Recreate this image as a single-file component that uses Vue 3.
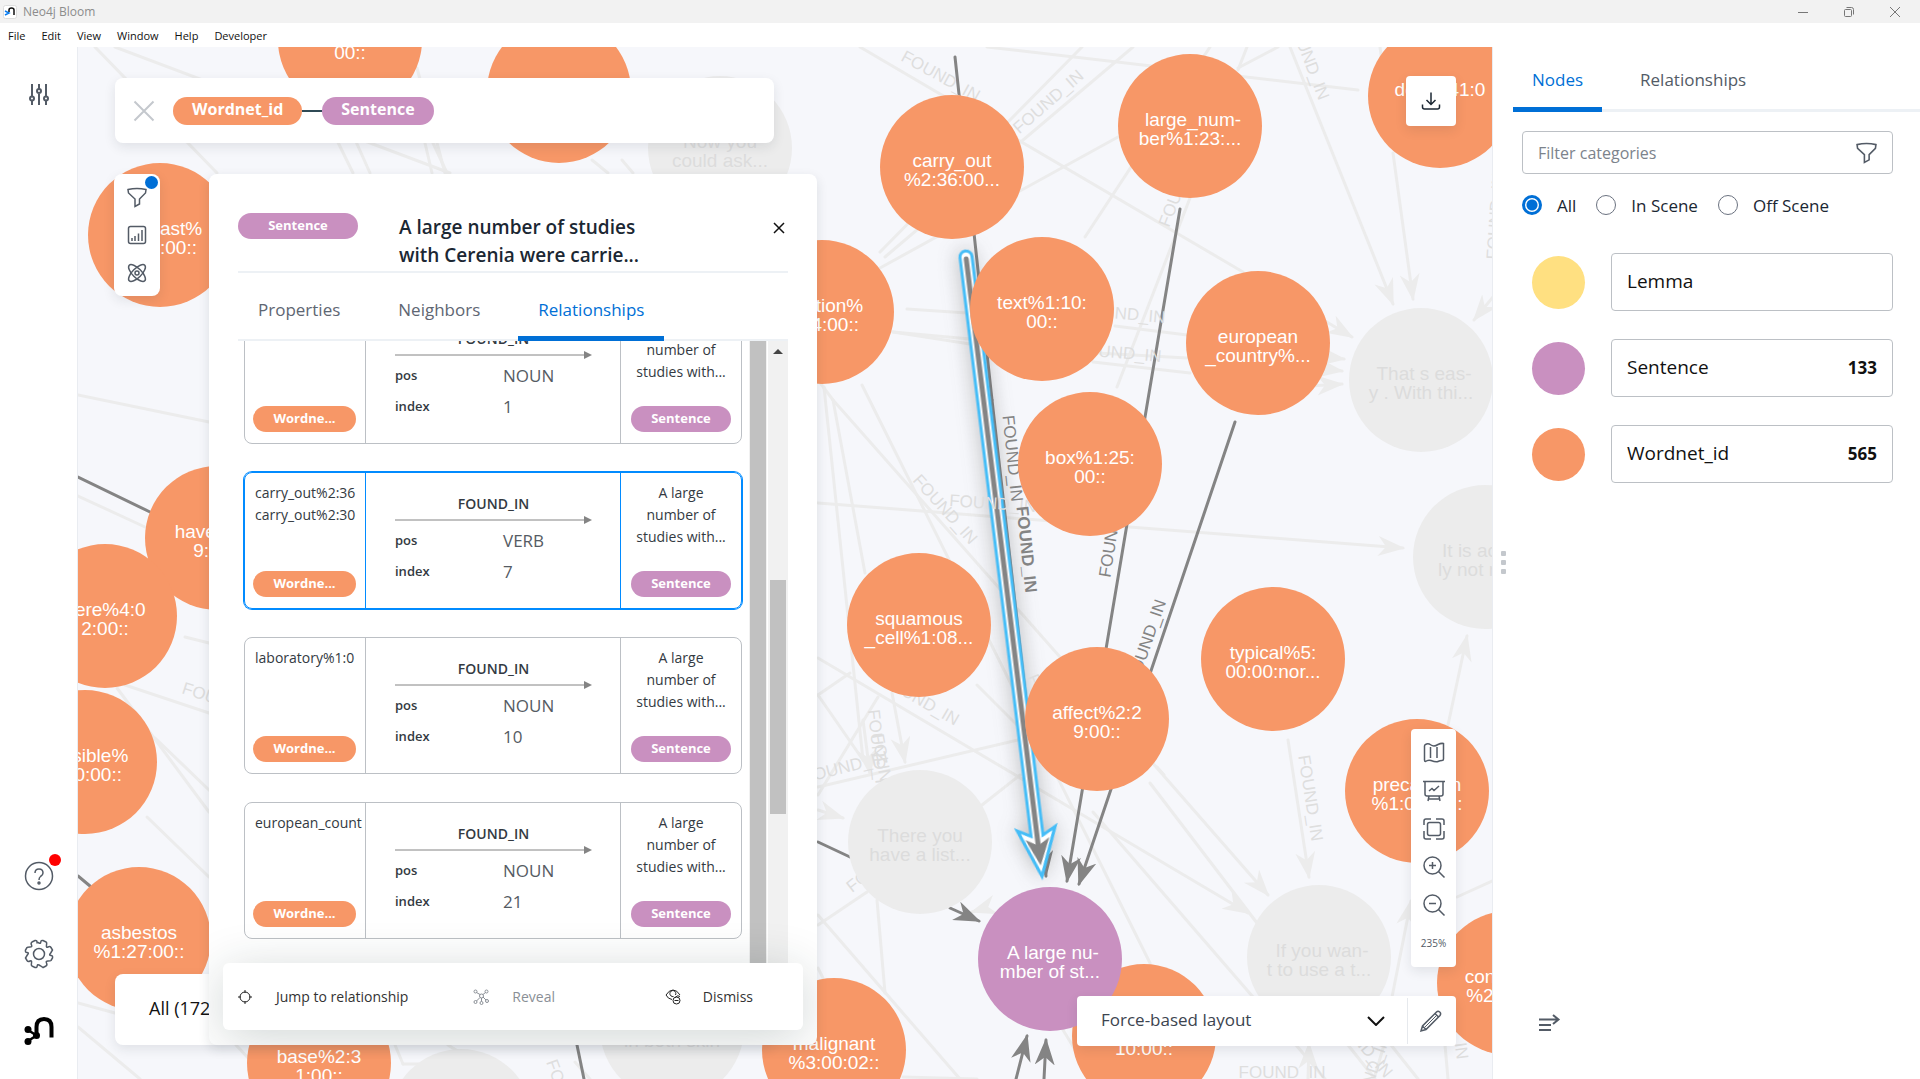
<script setup>
import { ref } from 'vue'

const R = 72

const nodes = [
  { x: 720, y: 148, kind: 'faded', lines: ['Now you', 'could ask...'] },
  { x: 1421, y: 380, kind: 'faded', lines: ['That s eas-', 'y . With thi...'] },
  { x: 1485, y: 557, kind: 'faded', lines: ['It is actual-', 'ly not rea...'] },
  { x: 920, y: 842, kind: 'faded', lines: ['There you', 'have a list...'] },
  { x: 1319, y: 957, kind: 'faded', lines: ['If you wan-', 't to use a t...'] },
  { x: 672, y: 1028, kind: 'faded', lines: ['', 'in both skin'] },
  { x: 461, y: 1121, kind: 'faded', lines: [] },
  { x: 350, y: 40, kind: 'word', lines: ['', '00::'] },
  { x: 559, y: 91, kind: 'word', lines: [] },
  { x: 160, y: 235, kind: 'word', lines: ['contrast%', '1:08:00::'] },
  { x: 217, y: 538, kind: 'word', lines: ['have%2:4', '9:00::'] },
  { x: 105, y: 616, kind: 'word', lines: ['here%4:0', '2:00::'] },
  { x: 85, y: 762, kind: 'word', lines: ['possible%', '3:00:00::'] },
  { x: 139, y: 939, kind: 'word', lines: ['asbestos', '%1:27:00::'] },
  { x: 319, y: 1063, kind: 'word', lines: ['base%2:3', '1:00::'] },
  { x: 834, y: 1050, kind: 'word', lines: ['malignant', '%3:00:02::'] },
  { x: 822, y: 312, kind: 'word', lines: ['solution%', '1:14:00::'] },
  { x: 952, y: 167, kind: 'word', lines: ['carry_out', '%2:36:00...'] },
  { x: 1190, y: 126, kind: 'word', lines: ['large_num-', 'ber%1:23:...'] },
  { x: 1440, y: 96, kind: 'word', lines: ['do%2:41:0', ''] },
  { x: 1042, y: 309, kind: 'word', lines: ['text%1:10:', '00::'] },
  { x: 1258, y: 343, kind: 'word', lines: ['european', '_country%...'] },
  { x: 1090, y: 464, kind: 'word', lines: ['box%1:25:', '00::'] },
  { x: 919, y: 625, kind: 'word', lines: ['squamous', '_cell%1:08...'] },
  { x: 1273, y: 659, kind: 'word', lines: ['typical%5:', '00:00:nor...'] },
  { x: 1097, y: 719, kind: 'word', lines: ['affect%2:2', '9:00::'] },
  { x: 1417, y: 791, kind: 'word', lines: ['precaution', '%1:04:00::'] },
  { x: 1509, y: 983, kind: 'word', lines: ['consider%', '%2:41:0...'] },
  { x: 1144, y: 1036, kind: 'word', lines: ['', '10:00::'] },
  { x: 1050, y: 959, kind: 'sentence', lines: ['A large nu-', 'mber of st...'] }
]

const fadedEdges = [
  [95, 47, 217, 173], [115, 47, 450, 173], [330, 126, 353, 173], [349, 126, 370, 173],
  [417, 68, 445, 173], [425, 143, 432, 173], [433, 143, 447, 173], [592, 160, 608, 173], [622, 160, 633, 173],
  [860, 47, 1243, 272], [987, 47, 1358, 90], [1082, 47, 880, 252], [1133, 47, 885, 257],
  [880, 268, 1118, 137], [1238, 68, 1278, 47], [1238, 70, 1247, 47], [1210, 47, 1085, 237],
  [1190, 198, 1117, 387], [907, 309, 967, 313], [1115, 326, 1187, 335], [893, 332, 970, 339],
  [893, 332, 970, 344], [1097, 353, 1187, 358], [1093, 362, 1190, 373], [862, 385, 1150, 963],
  [818, 380, 833, 400], [824, 387, 863, 760], [833, 400, 1060, 657], [833, 400, 865, 573],
  [1157, 767, 1164, 775], [977, 685, 1020, 728], [818, 695, 850, 673], [818, 695, 863, 760],
  [878, 697, 818, 795], [818, 787, 1018, 740], [1020, 775, 982, 805], [867, 892, 818, 925],
  [818, 915, 960, 1079], [877, 900, 885, 993], [903, 1077, 977, 1079], [1093, 812, 1253, 997],
  [1060, 1025, 1074, 1048], [1380, 47, 1382, 62], [1457, 897, 1492, 881], [1445, 1045, 1448, 1079],
  [1348, 1045, 1375, 1079], [1391, 1045, 1418, 1079], [1296, 1045, 1325, 1079], [1384, 1045, 1374, 1079],
  [78, 395, 209, 422], [78, 496, 145, 527], [185, 637, 209, 643], [125, 685, 209, 713],
  [117, 688, 209, 812], [155, 738, 209, 790], [147, 817, 209, 877], [78, 1003, 115, 1013],
  [78, 1027, 140, 1079], [236, 1045, 250, 1060], [395, 1045, 403, 1064], [403, 1064, 420, 1064],
  [448, 1045, 475, 1062], [575, 1062, 590, 1079], [1150, 783, 1257, 923], [818, 968, 823, 978]
]
const fadedArrows = [
  [1290, 47, 1393, 304], [1393, 153, 1413, 299], [1493, 297, 1474, 320], [1320, 318, 1352, 337],
  [1310, 355, 1344, 359], [1310, 367, 1342, 371], [1310, 386, 1342, 384], [818, 503, 1403, 548],
  [892, 693, 905, 762], [863, 720, 870, 774], [1150, 760, 1268, 895], [818, 658, 1248, 913],
  [818, 810, 843, 818], [1288, 740, 1309, 877], [1448, 725, 1467, 636], [1392, 997, 1411, 901],
  [1308, 1079, 1309, 1044], [985, 908, 972, 912]
]
const darkEdges = [
  [955, 57, 992, 400], [78, 477, 150, 512], [78, 876, 90, 886], [818, 842, 850, 857], [577, 1045, 584, 1079]
]
const darkArrows = [
  [992, 400, 1046, 876], [1180, 209, 1067, 881], [1235, 422, 1079, 884], [950, 908, 979, 921],
  [1016, 1079, 1027, 1036], [1044, 1079, 1046, 1040]
]

const label = (x, y, angle, anchor = 'middle', tone = 'faded') => ({ x, y, angle, anchor, tone })
const edgeLabels = [
  label(938, 81, 29), label(1052, 106, -41), label(1169, 228, -69, 'start'), label(1165, 323, 5, 'end'),
  label(1161, 362, 5, 'end'), label(1319, 101, 69, 'end'), label(941, 513, 48), label(949, 506, 4, 'start'),
  label(955, 726, 30, 'end'), label(868, 710, 84, 'start'), label(872, 735, 80, 'start'), label(889, 762, -14, 'end'), label(852, 893, -38, 'start'),
  label(1305, 799, 81), label(1282, 1078, 0), label(1385, 1079, 50, 'end'), label(1375, 1079, -70, 'middle'),
  label(1457, 1060, 82, 'end'), label(1498, 260, -86, 'start'), label(181, 693, 18, 'start'),
  label(546, 1062, 70, 'start'), label(1027, 677, 68, 'start'),
  label(1007, 459, 84, 'middle', 'dark'), label(1021, 550, 84, 'middle', 'dark strong'),
  label(1117, 535, -81, 'middle', 'dark'), label(1152, 643, -71, 'middle', 'dark')
]

const relations = [
  { from: ['typical%5:00'], pos: 'NOUN', index: 1 },
  { from: ['carry_out%2:36', 'carry_out%2:30'], pos: 'VERB', index: 7, selected: true },
  { from: ['laboratory%1:0'], pos: 'NOUN', index: 10 },
  { from: ['european_count'], pos: 'NOUN', index: 21 }
]

const categories = [
  { name: 'Lemma', count: '', tone: 'lemma' },
  { name: 'Sentence', count: '133', tone: 'sentence' },
  { name: 'Wordnet_id', count: '565', tone: 'word' }
]
const scopes = ['All', 'In Scene', 'Off Scene']
const scope = ref('All')
const filterText = ref('')
const menus = ['File', 'Edit', 'View', 'Window', 'Help', 'Developer']
</script>

<template>
  <div class="app">
    <header class="titlebar">
      <svg class="app-icon" viewBox="0 0 14 14" aria-hidden="true">
        <rect x="0.5" y="0.5" width="13" height="13" rx="2" fill="#fff" stroke="#ddd" />
        <path d="M6 7V5q0-2 2.500-2T11 5v5" fill="none" stroke="#111" stroke-width="1.500" />
        <path d="M2 6l4 2-4 2" fill="none" stroke="#0a7df0" stroke-width="1.500" />
      </svg>
      <span class="app-name">Neo4j Bloom</span>
      <div class="window-buttons">
        <button aria-label="Minimize"><svg width="12" height="12" viewBox="0 0 12 12"><path d="M1 6.500h10" /></svg></button>
        <button aria-label="Restore"><svg width="12" height="12" viewBox="0 0 12 12"><rect x="1.500" y="3.500" width="7" height="7" rx="1" /><path d="M3.500 1.500h5q2 0 2 2v5" /></svg></button>
        <button aria-label="Close window"><svg width="12" height="12" viewBox="0 0 12 12"><path d="M1 1l10 10M11 1L1 11" /></svg></button>
      </div>
    </header>
    <nav class="menubar">
      <button v-for="m in menus" :key="m">{{ m }}</button>
    </nav>

    <div class="workspace">
      <aside class="rail">
        <button aria-label="Perspectives">
          <svg width="22" height="24" viewBox="0 0 22 24" class="ico bold"><path d="M4 1v12M4 18v4M11 1v5M11 11v11M18 1v12M18 18v4" /><circle cx="4" cy="15.500" r="2" /><circle cx="11" cy="8" r="2" /><circle cx="18" cy="15.500" r="2" /></svg>
        </button>
        <div class="rail-bottom">
          <button aria-label="Help">
            <svg width="30" height="30" viewBox="0 0 30 30" class="ico"><circle cx="15" cy="15" r="13.500" /><path d="M11 12q0-4 4-4t4 4q0 2-2.500 3.500Q15 16.500 15 19" /><circle cx="15" cy="22" r="1" /></svg>
            <span class="alert-dot"></span>
          </button>
          <button aria-label="Settings">
            <svg width="30" height="30" viewBox="0 0 30 30" class="ico"><circle cx="15" cy="15" r="5.500" /><path d="M13 4.500Q13.500 1 11 1.500L8 3Q6.500 4 7.500 6t-1.500 2T3 8.500L1.500 11Q1 13.500 3 13.500T4 15t-1 1.500T1.500 19L3 21.500Q4 23 6 22t1.500 2T8 27l3 1.500Q13 29 13.200 27T15 26t1.800 1T19 28.500l3-1.500Q23.500 26 22.500 24T24 22t3-.5L28.500 19Q29 16.500 27 16.500T26 15t1-1.500T28.500 11L27 8.500Q26 7 24 8t-1.500-2T22 3l-3-1.500Q17 1 16.800 3T15 4t-2-.5" /></svg>
          </button>
          <svg width="30" height="28" viewBox="0 0 30 28" role="img" aria-label="Neo4j">
            <path d="M12.500 17V10q0-8 7.500-8t7.500 8v10.500" fill="none" stroke="#000" stroke-width="4" />
            <path d="M4 13l8.500 5.500L4 24" fill="none" stroke="#000" stroke-width="2.500" />
            <circle cx="4" cy="12.500" r="3.500" /><circle cx="12.500" cy="18.500" r="3.500" /><circle cx="4" cy="24.500" r="3.500" />
          </svg>
        </div>
      </aside>

      <main class="scene">
        <svg class="graph" aria-label="Graph scene">
          <defs>
            <marker id="tip-faded" markerUnits="userSpaceOnUse" markerWidth="28" markerHeight="22" refX="25" refY="10" orient="auto"><path d="M0 0L27 10L0 20L8 10Z" fill="#ececec" /></marker>
            <marker id="tip-dark" markerUnits="userSpaceOnUse" markerWidth="28" markerHeight="22" refX="25" refY="10" orient="auto"><path d="M0 0L27 10L0 20L8 10Z" fill="#848484" /></marker>
          </defs>
          <g transform="translate(-78 -47)">
            <g class="edge faded">
              <line v-for="(e, i) in fadedEdges" :key="i" :x1="e[0]" :y1="e[1]" :x2="e[2]" :y2="e[3]" />
              <line v-for="(e, i) in fadedArrows" :key="'a' + i" :x1="e[0]" :y1="e[1]" :x2="e[2]" :y2="e[3]" marker-end="url(#tip-faded)" />
            </g>
            <g class="edge dark">
              <line v-for="(e, i) in darkEdges" :key="i" :x1="e[0]" :y1="e[1]" :x2="e[2]" :y2="e[3]" />
              <line v-for="(e, i) in darkArrows" :key="'a' + i" :x1="e[0]" :y1="e[1]" :x2="e[2]" :y2="e[3]" marker-end="url(#tip-dark)" />
            </g>
            <g class="picked" transform="translate(966 257) rotate(83)">
              <path class="halo" d="M0 -6H583L576 -19L624 0L576 19L583 6H0A6 6 0 0 1 0 -6Z" />
              <line x1="2" y1="0" x2="598" y2="0" />
              <path class="head" d="M586 -12L613 0L586 12L593 0Z" />
            </g>
            <text v-for="(l, i) in edgeLabels" :key="'l' + i" :class="['edge-label', l.tone]" :text-anchor="l.anchor" :transform="`translate(${l.x} ${l.y}) rotate(${l.angle})`">FOUND_IN</text>
            <g v-for="(n, i) in nodes" :key="'n' + i" :class="['node', n.kind]">
              <circle :cx="n.x" :cy="n.y" :r="R" />
              <text v-for="(t, j) in n.lines" :key="j" :x="t.endsWith('-') ? n.x + 3 : n.x" :y="n.y + j * 19">{{ t }}</text>
            </g>
          </g>
        </svg>

        <section class="search float">
          <button aria-label="Clear search"><svg width="22" height="22" viewBox="0 0 22 22"><path d="M1.500 1.500l19 19M20.500 1.500l-19 19" fill="none" stroke="#c4c8cd" stroke-width="2" /></svg></button>
          <div class="pattern">
            <span class="chip word">Wordnet_id</span>
            <span class="link"></span>
            <span class="chip sentence">Sentence</span>
          </div>
        </section>

        <section class="left-tools float">
          <button aria-label="Filter"><svg width="20" height="20" viewBox="0 0 20 20" class="ico"><path d="M1 2.500Q10 .5 19 2.500L18.500 6 12.500 12v5L8 19.500V12L1.500 6Z" /></svg><span class="new-dot"></span></button>
          <button aria-label="Slicer"><svg width="20" height="20" viewBox="0 0 20 20" class="ico"><rect x="1.500" y="1.500" width="17" height="17" rx="2" /><path d="M5 16v-3M8 16v-5M11.500 16V8.500M15 16V5" /></svg></button>
          <button aria-label="Graph data science"><svg width="20" height="20" viewBox="0 0 20 20" class="ico"><ellipse cx="10" cy="10" rx="11" ry="4.500" transform="rotate(45 10 10)" /><ellipse cx="10" cy="10" rx="11" ry="4.500" transform="rotate(-45 10 10)" /><circle cx="10" cy="10" r="2" /></svg></button>
        </section>

        <section class="all-card float">All (172</section>

        <section class="detail">
          <header class="detail-head">
            <span class="tag sentence">Sentence</span>
            <h2>A large number of studies<br />with Cerenia were carrie...</h2>
            <button aria-label="Close"><svg width="12" height="12" viewBox="0 0 12 12"><path d="M1 1l10 10M11 1L1 11" fill="none" stroke="#111" stroke-width="1.500" /></svg></button>
          </header>
          <nav class="tabs">
            <button>Properties</button>
            <button>Neighbors</button>
            <button class="on">Relationships</button>
          </nav>
          <div class="detail-body">
            <div class="cards">
              <article v-for="r in relations" :key="r.index" :class="['rel', { selected: r.selected }]">
                <div class="end">
                  <div class="names"><span v-for="f in r.from" :key="f">{{ f }}</span></div>
                  <span class="tag word">Wordne...</span>
                </div>
                <div class="mid">
                  <strong>FOUND_IN</strong>
                  <svg class="arrow" viewBox="0 0 197 8" aria-hidden="true"><path d="M0 4H190" stroke="#848484" stroke-width="1" /><path d="M189 0L197 4L189 8Z" fill="#848484" /></svg>
                  <dl><dt>pos</dt><dd>{{ r.pos }}</dd><dt>index</dt><dd>{{ r.index }}</dd></dl>
                </div>
                <div class="end to">
                  <p>A large number of studies with...</p>
                  <span class="tag sentence">Sentence</span>
                </div>
              </article>
            </div>
            <div class="inner-bar"></div>
            <div class="outer-bar"><i class="up"></i><i class="thumb"></i></div>
          </div>
          <footer class="actions">
            <button class="jump"><svg width="16" height="16" viewBox="0 0 16 16" class="ico black"><circle cx="8" cy="8" r="5" /><path d="M8 1v3M8 12v3M1 8h3M12 8h3" /></svg>Jump to relationship</button>
            <button class="reveal" disabled><svg width="16" height="16" viewBox="0 0 16 16" class="ico"><circle cx="8.500" cy="7" r="2" /><circle cx="2.500" cy="2.500" r="1.500" /><circle cx="13.500" cy="2.500" r="1.500" /><circle cx="2.500" cy="13" r="1.500" /><circle cx="8.500" cy="14" r="1.500" /><circle cx="14" cy="12" r="1.500" /><path d="M3.500 3.500l3.500 2M12.500 3.500L10 5.500M3.500 12L7 8.500M8.500 9v3.500M10 8l3 3" /></svg>Reveal</button>
            <button class="dismiss"><svg width="16" height="16" viewBox="0 0 16 16" class="ico black"><path d="M1 6Q4 1 8 1t7 5M1 6q2 4 6 4.500" /><path d="M8.500 7.500A3 3 0 1 1 10.500 6" /><circle cx="11.500" cy="11.500" r="3.500" /><path d="M9.500 11.500h4M10 8.500q3-3 5-1" /></svg>Dismiss</button>
          </footer>
        </section>

        <button class="download float" aria-label="Export"><svg width="20" height="20" viewBox="0 0 20 20" fill="none" stroke="#1b2733" stroke-width="1.500"><path d="M10 1.500V13M5.500 9l4.500 4.500L14.500 9M1.500 13.500V16q0 2 2 2h13q2 0 2-2v-2.500" /></svg></button>

        <section class="view-tools float">
          <button aria-label="Map"><svg width="22" height="22" viewBox="0 0 22 22" class="ico"><path d="M1.500 4q0-1 1-1.500Q5 1 8 3t7-.5q3-1.500 5.500-1V17q0 1.500-1.500 1.500-2 0-4 1t-7-1q-3-1-5.500 1-1 0-1-1.500ZM7.500 5v11M14 5v11" /></svg></button>
          <button aria-label="Presentation mode"><svg width="22" height="22" viewBox="0 0 22 22" class="ico"><path d="M0 1.500h22M2 1.500V14q0 2 2 2h14q2 0 2-2V1.500M6 11l3-2.500 2 2L16 6M6 16l-1 5M16 16l1 5M6 19h10" /></svg></button>
          <button aria-label="Fit to screen"><svg width="22" height="22" viewBox="0 0 22 22" class="ico"><rect x="4.500" y="4.500" width="13" height="13" rx="2" /><path d="M1 7V3q0-2 2-2h5M13 1h6q2 0 2 2v4M21 13v6q0 2-2 2h-6M8 21H3q-2 0-2-2v-6" /></svg></button>
          <button aria-label="Zoom in"><svg width="22" height="22" viewBox="0 0 22 22" class="ico"><circle cx="9.500" cy="9.500" r="8.500" /><path d="M15.500 15.500l6 6M6 9.500h7M9.500 6v7" /></svg></button>
          <button aria-label="Zoom out"><svg width="22" height="22" viewBox="0 0 22 22" class="ico"><circle cx="9.500" cy="9.500" r="8.500" /><path d="M15.500 15.500l6 6M6 9.500h7" /></svg></button>
          <span>235%</span>
        </section>

        <section class="layout-bar float">
          <div class="layout-pick">
            <select aria-label="Layout"><option>Force-based layout</option></select>
            <svg width="18" height="10" viewBox="0 0 18 10" aria-hidden="true"><path d="M1 1l8 8 8-8" fill="none" stroke="#111" stroke-width="2" /></svg>
          </div>
          <button aria-label="Edit layout"><svg width="22" height="22" viewBox="0 0 22 22" class="ico"><path d="M1 21l1.500-5L16.500 2q1.500-1.500 3.200 0t.3 3.500L6 19.500ZM15 3.500l3.500 3.500M2.500 16L6 19.500" /><path d="M17 5L5 17" stroke-width="1" /></svg></button>
        </section>
      </main>

      <aside class="legend">
        <span class="grip"><i></i><i></i><i></i></span>
        <nav class="legend-tabs">
          <button class="on">Nodes</button>
          <button>Relationships</button>
        </nav>
        <div class="legend-body">
          <div class="filter">
            <input v-model="filterText" type="text" placeholder="Filter categories" aria-label="Filter categories" />
            <svg width="21" height="21" viewBox="0 0 20 20" class="ico"><path d="M1 2.500Q10 .5 19 2.500L18.500 6 12.500 12v5L8 19.500V12L1.500 6Z" /></svg>
          </div>
          <div class="scopes">
            <label v-for="s in scopes" :key="s"><input v-model="scope" type="radio" name="scope" :value="s" />{{ s }}</label>
          </div>
          <ul>
            <li v-for="c in categories" :key="c.name">
              <span :class="['dot', c.tone]"></span>
              <button>{{ c.name }}<b>{{ c.count }}</b></button>
            </li>
          </ul>
        </div>
        <button class="collapse" aria-label="Collapse panel"><svg width="21" height="18" viewBox="0 0 21 18" class="ico bold"><path d="M0 5.500h19M14 1l5.500 4.500L14 10M0 11h12M0 16h12" /></svg></button>
      </aside>
    </div>
  </div>
</template>

<style>
body { margin: 0; background: #fff; }
</style>

<style scoped>
* { box-sizing: border-box; }
.app { display: flex; flex-direction: column; min-height: 100vh; font-family: "Open Sans", "Noto Sans", sans-serif; font-size: 14px; color: #1b2733; }
button { border: 0; padding: 0; background: none; font: inherit; color: inherit; display: flex; align-items: center; justify-content: center; }
.ico { fill: none; stroke: #535b66; stroke-width: 1.5; overflow: visible; flex: none; }
.ico.bold { stroke-width: 2; }
.ico.black { stroke: #222; stroke-width: 1; }

.titlebar { display: flex; align-items: center; height: 23px; background: #f2f2f2; padding-left: 3px; }
.app-icon { width: 14px; height: 14px; }
.app-name { margin-left: 6px; font-size: 12px; color: #8c8c8c; }
.window-buttons { display: flex; margin-left: auto; padding-right: 2px; }
.window-buttons button { width: 46px; height: 20px; }
.window-buttons svg { fill: none; stroke: #777; stroke-width: 1; }
.menubar { display: flex; gap: 16px; height: 24px; padding: 0 8px; align-items: center; font-size: 11px; color: #111; }

.workspace { flex: 1; display: flex; }
.rail { width: 78px; flex: none; border-right: 1px solid #e9ecf1; display: flex; flex-direction: column; align-items: center; padding: 36px 0 34px; }
.rail-bottom { margin-top: auto; display: flex; flex-direction: column; align-items: center; gap: 48px; }
.rail-bottom button { position: relative; }
.alert-dot { position: absolute; width: 12px; height: 12px; border-radius: 50%; background: #f00; top: -7px; right: -7px; }

.scene { flex: 1; position: relative; overflow: hidden; background: #f6f7fb; min-width: 0; }
.graph { position: absolute; inset: 0; width: 100%; height: 100%; }
.edge line { stroke-width: 3; stroke-linecap: round; }
.edge.faded line { stroke: #ececec; }
.edge.dark line { stroke: #848484; }
.picked { filter: drop-shadow(0 0 10px rgba(60, 60, 60, .35)); }
.picked .halo { fill: #fff; stroke: #45bdf7; stroke-width: 3; }
.picked line { stroke: #848484; stroke-width: 5; stroke-linecap: round; }
.picked .head { fill: #848484; }
.edge-label { font: 17px "Liberation Sans", Arial, sans-serif; fill: #dedede; }
.edge-label.dark { fill: #848484; }
.edge-label.strong { font-weight: 700; }
.node text { font: 19px "Liberation Sans", Arial, sans-serif; fill: #fff; text-anchor: middle; }
.node.word circle { fill: #f79767; }
.node.sentence circle { fill: #c990c0; }
.node.faded circle { fill: #ececec; }
.node.faded text { fill: #dcdcdc; }

.float { position: absolute; background: #fff; border-radius: 8px; box-shadow: 0 4px 12px rgba(27, 39, 51, .1); }
.search { left: 37px; top: 31px; width: 659px; height: 65px; display: flex; align-items: center; padding: 0 18px; gap: 18px; }
.pattern { display: flex; align-items: center; }
.link { width: 20px; height: 2px; background: #2f4a55; }
.chip { height: 28px; line-height: 25px; border-radius: 14px; padding: 0 19px; color: #fff; font-weight: 700; font-size: 16px; }
.word { background: #f79767; }
.sentence { background: #c990c0; }
.lemma { background: #ffe081; }
.tag { display: block; height: 26px; line-height: 25px; border-radius: 13px; text-align: center; color: #fff; font-weight: 700; font-size: 13px; }

.left-tools { left: 36px; top: 127px; width: 46px; height: 122px; display: flex; flex-direction: column; align-items: center; justify-content: space-between; padding: 13px 0; }
.left-tools button { position: relative; }
.new-dot { position: absolute; width: 13px; height: 13px; border-radius: 50%; background: #006fd6; right: -11px; top: -11px; }
.all-card { left: 37px; bottom: 34px; width: 659px; height: 71px; line-height: 68px; padding-left: 34px; font-size: 18px; color: #111; }

.detail { position: absolute; left: 131px; top: 127px; bottom: 34px; width: 608px; background: #fff; border-radius: 8px; box-shadow: 0 4px 12px rgba(27, 39, 51, .12); display: flex; flex-direction: column; overflow: hidden; }
.detail-head { display: flex; align-items: flex-start; margin: 38px 29px 0; height: 61px; border-bottom: 2px solid #edf1f5; }
.detail-head .tag { width: 120px; margin-top: 1px; }
.detail-head h2 { margin: 1px 0 0 41px; font-size: 19px; line-height: 28px; font-weight: 600; white-space: nowrap; }
.detail-head button { margin: 10px 3px 0 auto; }
.tabs { display: flex; gap: 18px; margin: 0 29px; height: 68px; border-bottom: 2px solid #edf1f5; color: #5e6672; font-size: 17px; }
.tabs button { padding: 10px 20px 0; border-bottom: 5px solid transparent; margin-bottom: -2px; }
.tabs .on, .legend-tabs .on { color: #006fd6; }
.tabs .on { border-bottom-color: #006fd6; border-radius: 4px 4px 0 0; }
.detail-body { flex: 1; min-height: 0; overflow: hidden; display: flex; margin: 0 29px; }
.cards { width: 498px; margin: -34px 7px 0 6px; display: flex; flex-direction: column; gap: 28px; }
.rel { flex: none; height: 137px; display: grid; grid-template-columns: 120px 1fr 120px; border: 1px solid #bcc0c5; border-radius: 8px; font-size: 14px; color: #333a42; }
.rel.selected { border-color: #018bff; box-shadow: 0 0 0 1px #018bff; }
.end { display: flex; flex-direction: column; justify-content: space-between; min-width: 0; padding: 9px 9px 11px 8px; text-align: center; line-height: 22px; }
.end.to { padding: 9px 10px 11px; }
.end p { margin: 0; padding: 0 4px; }
.names { display: flex; flex-direction: column; text-align: left; white-space: nowrap; padding-left: 2px; }
.mid { border: solid #bcc0c5; border-width: 0 1px; padding: 21px 28px 0 29px; display: flex; flex-direction: column; }
.selected .mid { border-color: #018bff; }
.mid strong { width: 197px; text-align: center; font-size: 14px; font-weight: 600; line-height: 20px; margin-bottom: 2px; }
.arrow { display: block; width: 197px; height: 8px; }
dl { display: grid; grid-template-columns: 108px 1fr; margin: 1px 0 0; line-height: 31px; }
dt { font-size: 13px; font-weight: 600; }
dd { margin: 0; font-size: 17px; color: #555b63; }
.inner-bar { width: 18px; border: solid #f1f1f1; border-width: 0 1px; background: #c1c1c1; }
.outer-bar { width: 21px; margin-left: auto; border-left: 1px solid #fff; background: #f1f1f1; display: flex; flex-direction: column; align-items: center; }
.up { margin-top: 8px; border: 5px solid transparent; border-top: 0; border-bottom-color: #444; }
.thumb { margin-top: 226px; width: 16px; height: 234px; background: #c1c1c1; }
.actions { position: relative; flex: none; display: flex; align-items: center; height: 67px; margin: 0 14px 15px; padding: 0 50px 0 14px; background: #fff; border-radius: 6px; box-shadow: 0 8px 50px rgba(27, 51, 45, .2); font-size: 14px; color: #333; }
.actions .jump { gap: 23px; }
.actions .reveal { gap: 23px; margin-left: 65px; color: #8a8f96; }
.actions .dismiss { gap: 22px; margin-left: auto; }
.actions .reveal .ico { stroke: #8a8f96; stroke-width: 1; }

.download { right: 36px; top: 29px; width: 50px; height: 50px; border-radius: 4px; }
.view-tools { right: 36px; bottom: 112px; width: 45px; height: 238px; border-radius: 4px; display: flex; flex-direction: column; align-items: center; padding: 13px 0; gap: 16px; font-size: 10px; color: #535b66; }
.view-tools span { margin-top: 4px; }
.layout-bar { right: 36px; bottom: 33px; width: 379px; height: 50px; border-radius: 4px; display: flex; padding: 2px 0; }
.layout-bar > button { width: 49px; padding-right: 3px; border-left: 1px solid #e6e9ed; }
.layout-pick { flex: 1; display: flex; align-items: center; padding-right: 22px; }
select { appearance: none; flex: 1; height: 40px; border: 0; background: none; padding: 0 0 4px 24px; font: inherit; font-size: 17px; color: #3c444f; }

.legend { width: 428px; flex: none; border-left: 1px solid #e9ecf1; position: relative; display: flex; flex-direction: column; }
.grip { position: absolute; left: 8px; top: 504px; display: flex; flex-direction: column; gap: 4px; }
.grip i { width: 5px; height: 5px; border-radius: 1px; background: #c4c8cd; }
.legend-tabs { display: flex; gap: 19px; height: 65px; margin-left: 20px; font-size: 17px; color: #535b66; border-bottom: 3px solid #edf1f5; }
.legend-tabs button { padding: 5px 19px 0; border-bottom: 5px solid transparent; margin-bottom: -3px; }
.legend-tabs .on { border-bottom-color: #006fd6; border-radius: 4px 4px 0 0; }
.legend-body { padding: 19px 27px 0 29px; }
.filter { display: flex; align-items: center; height: 43px; padding: 0 15px; border: 1px solid #bcc0c5; border-radius: 4px; }
.filter input { flex: 1; min-width: 0; border: 0; outline: 0; padding: 0; font: inherit; font-size: 16px; }
.filter input::placeholder { color: #7c838c; opacity: 1; }
.scopes { display: flex; gap: 20px; height: 62px; align-items: center; font-size: 17px; }
.scopes label { display: flex; align-items: center; gap: 15px; }
.scopes input { appearance: none; width: 20px; height: 20px; margin: 0; border: 1px solid #6b7280; border-radius: 50%; background: #fff; }
.scopes input:checked { border: 3px solid #006fd6; background: radial-gradient(circle, #006fd6 5px, #fff 6px); }
ul { list-style: none; margin: 17px 0 0; padding: 0 0 0 10px; display: flex; flex-direction: column; gap: 28px; }
li { display: flex; align-items: center; gap: 26px; }
.dot { width: 53px; height: 53px; border-radius: 50%; }
li button { flex: 1; height: 58px; justify-content: space-between; border: 1px solid #bcc0c5; border-radius: 4px; padding: 0 15px 2px; font-size: 19px; color: #111; }
li b { font-size: 17px; }
.collapse { margin: auto auto 47px 46px; }
</style>
